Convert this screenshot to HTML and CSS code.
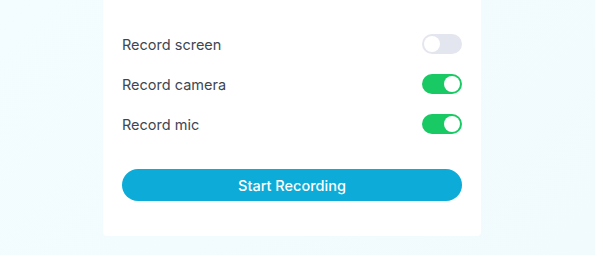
FILE: index.html
```html
<!DOCTYPE html>
<html lang="en">
<head>
    <meta charset="UTF-8">
    <meta name="viewport" content="width=device-width, initial-scale=1.0">
    <title>Recorder</title>
    <link rel="stylesheet" href="styles.css">
</head>
<body>
    <div class="card">
        <div class="option">
            <span>Record screen</span>
            <label class="switch">
                <input type="checkbox">
                <span class="slider"></span>
            </label>
        </div>
        <div class="option">
            <span>Record camera</span>
            <label class="switch">
                <input type="checkbox" checked>
                <span class="slider"></span>
            </label>
        </div>
        <div class="option">
            <span>Record mic</span>
            <label class="switch">
                <input type="checkbox" checked>
                <span class="slider"></span>
            </label>
        </div>
        <button class="start">Start Recording</button>
    </div>
</body>
</html>
```

FILE: styles.css
```css
body {
    margin: 0;
    height: 255px;
    font-family: 'Inter', sans-serif;
    background: linear-gradient(135deg, #f3fcfe 0%, #f1fafd 100%);
}
.card {
    width: 340px;
    margin-left: 103px;
    padding: 34px 19px 35px;
    background: #fff;
    border-radius: 0 0 4px 4px;
    display: flex;
    flex-direction: column;
    gap: 20px;
}
.option {
    display: flex;
    justify-content: space-between;
    align-items: center;
    height: 20px;
    font-size: 14.5px;
    color: #3d4752;
}
.switch {
    position: relative;
    width: 40px;
    height: 20px;
}
.switch input {
    display: none;
}
.slider {
    position: absolute;
    inset: 0;
    background: #e4e6ef;
    border-radius: 10px;
    cursor: pointer;
}
.slider::before {
    content: '';
    position: absolute;
    left: 2px;
    top: 2px;
    width: 16px;
    height: 16px;
    border-radius: 50%;
    background: #fff;
}
.switch input:checked + .slider {
    background: #19c964;
}
.switch input:checked + .slider::before {
    left: 22px;
}
.start {
    margin-top: 15px;
    height: 32px;
    border: none;
    border-radius: 16px;
    background: #0dabd7;
    color: #fff;
    font-family: 'Inter', sans-serif;
    font-size: 14.5px;
    font-weight: 500;
    cursor: pointer;
}
```
